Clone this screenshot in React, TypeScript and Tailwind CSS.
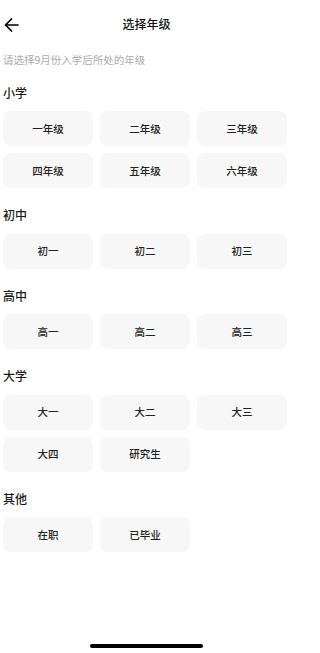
const sections: { title: string; items: string[] }[] = [
  { title: "小学", items: ["一年级", "二年级", "三年级", "四年级", "五年级", "六年级"] },
  { title: "初中", items: ["初一", "初二", "初三"] },
  { title: "高中", items: ["高一", "高二", "高三"] },
  { title: "大学", items: ["大一", "大二", "大三", "大四", "研究生"] },
  { title: "其他", items: ["在职", "已毕业"] },
]

const App = () => {
  return (
    <div
      className="flex h-[653px] w-[293px] flex-col bg-white"
      style={{ fontFamily: '"Noto Sans CJK SC", "Noto Sans", sans-serif' }}
    >
      {/* header */}
      <div className="relative flex h-[48px] items-center justify-center">
        <button className="absolute left-[4px] top-[18px] text-black">
          <svg width="15" height="14" viewBox="0 0 15 14" fill="none">
            <path
              d="M14 7H1.5M7.5 1L1.5 7L7.5 13"
              stroke="currentColor"
              strokeWidth="1.7"
              strokeLinecap="round"
              strokeLinejoin="round"
            />
          </svg>
        </button>
        <h1 className="text-[12px] font-medium text-[#111]">选择年级</h1>
      </div>

      <div className="pl-[3px] pr-[6px]">
        <p className="mt-[4px] text-[10.5px] leading-[15px] text-[#ababab]">请选择9月份入学后所处的年级</p>

        {sections.map((section, i) => (
          <div key={section.title} className={i === 0 ? "mt-[17.5px]" : "mt-[19px]"}>
            <h2 className="mb-[10.5px] text-[12px] font-medium leading-[16px] text-[#1a1a1a]">{section.title}</h2>
            <div className="grid grid-cols-3 gap-[7px]">
              {section.items.map((item) => (
                <button
                  key={item}
                  className="flex h-[35px] items-center justify-center rounded-[8px] bg-[#f7f7f7] text-[10.5px] font-medium text-[#222]"
                >
                  {item}
                </button>
              ))}
            </div>
          </div>
        ))}
      </div>

      <div className="mx-auto mb-[5px] mt-auto h-[4px] w-[113px] rounded-full bg-black" />
    </div>
  )
}

export default App
